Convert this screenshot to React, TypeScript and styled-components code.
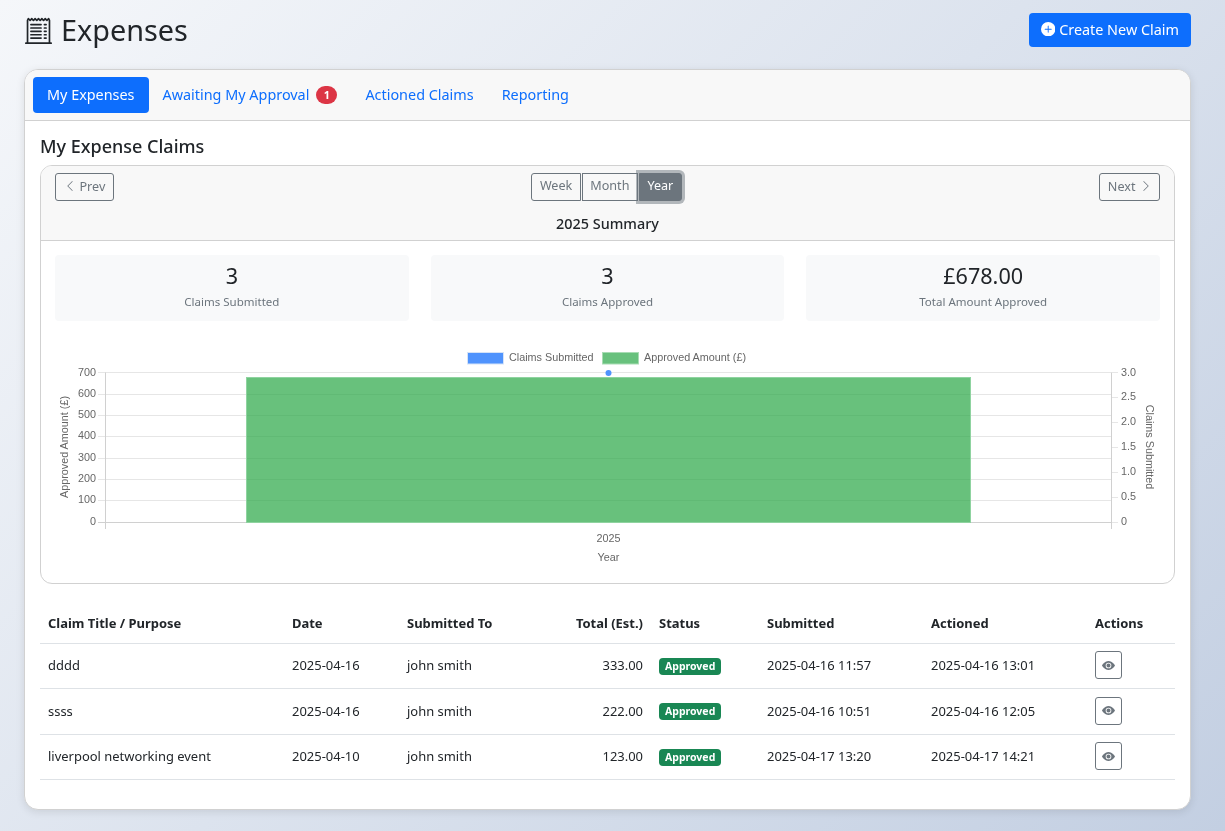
import React from 'react'
import styled, { createGlobalStyle } from 'styled-components'
import { BsReceiptCutoff, BsPlusCircleFill, BsEyeFill, BsChevronLeft, BsChevronRight } from 'react-icons/bs'

const GlobalStyle = createGlobalStyle`
  html, body { margin: 0; padding: 0; }
  body {
    min-height: 831px;
    font-family: "Noto Sans", sans-serif;
    color: #212529;
    font-size: 12.96px;
    background: linear-gradient(135deg, #f5f7fa 0%, #c3cfe2 100%);
  }
  * { box-sizing: border-box; }
`

const Page = styled.div`
  padding: 13px 34px 21px 24px;
  will-change: transform;
`

const TopBar = styled.div`
  display: flex;
  justify-content: space-between;
  align-items: flex-start;
  margin-bottom: 22px;
`

const Title = styled.h1`
  display: flex;
  align-items: center;
  gap: 9px;
  margin: 0;
  padding-left: 1px;
  font-size: 28.8px;
  line-height: 34px;
  font-weight: 400;
  color: #212529;
  svg { font-size: 27px; }
`

const CreateButton = styled.button`
  display: flex;
  align-items: center;
  gap: 4px;
  height: 34px;
  padding: 0 12px 2px;
  border: 0;
  border-radius: 4px;
  background: #0d6efd;
  color: #fff;
  font: 400 14.4px "Noto Sans", sans-serif;
`

const MainCard = styled.div`
  background: #fff;
  border: 1px solid #d1d1d1;
  border-radius: 14px;
  overflow: hidden;
  box-shadow: 0 2px 8px rgba(0, 0, 0, 0.1);
  height: 741px;
`

const TabBar = styled.div`
  display: flex;
  align-items: center;
  height: 51px;
  padding: 0 8px;
  background: #f8f8f8;
  border-bottom: 1px solid #d1d1d1;
`

const Tab = styled.a<{ $active?: boolean }>`
  display: flex;
  align-items: center;
  height: 36px;
  padding: 0 14px 1px;
  border-radius: 4px;
  font-size: 14.4px;
  color: ${(p) => (p.$active ? '#fff' : '#0d6efd')};
  background: ${(p) => (p.$active ? '#0d6efd' : 'transparent')};
`

const CountBadge = styled.span`
  display: inline-flex;
  align-items: center;
  justify-content: center;
  width: 21px;
  height: 18px;
  margin-left: 7px;
  border-radius: 9px;
  background: #dc3545;
  color: #fff;
  font-size: 10.8px;
  font-weight: 700;
`

const CardBody = styled.div`
  padding: 12px 15px;
`

const SectionTitle = styled.h2`
  margin: 0 0 6px;
  font-size: 18px;
  line-height: 26px;
  font-weight: 500;
`

const SummaryCard = styled.div`
  border: 1px solid #d1d1d1;
  border-radius: 12px;
  overflow: hidden;
  height: 419px;
  margin-bottom: 20px;
`

const SummaryHeader = styled.div`
  height: 75px;
  padding: 7px 14px 0;
  background: #f8f8f8;
  border-bottom: 1px solid #d1d1d1;
`

const PeriodRow = styled.div`
  display: flex;
  justify-content: space-between;
  align-items: flex-start;
`

const OutlineButton = styled.button`
  display: flex;
  align-items: center;
  gap: 4px;
  height: 28px;
  padding: 0 7.5px 2px;
  background: transparent;
  border: 1px solid #6c757d;
  border-radius: 3px;
  color: #6c757d;
  font: 400 12.6px "Noto Sans", sans-serif;
  svg { font-size: 12px; }
`

const RangeGroup = styled.div`
  display: flex;
  gap: 1px;
`

const RangeButton = styled.button<{ $active?: boolean; $first?: boolean; $last?: boolean }>`
  height: 28px;
  padding: 0 7.5px 3px;
  background: ${(p) => (p.$active ? '#6c757d' : 'transparent')};
  border: 1px solid #6c757d;
  border-radius: ${(p) => (p.$first ? '3px 0 0 3px' : p.$last ? '0 3px 3px 0' : '0')};
  color: ${(p) => (p.$active ? '#fff' : '#6c757d')};
  box-shadow: ${(p) => (p.$active ? '0 0 0 3px rgba(108, 117, 125, 0.5)' : 'none')};
  font: 400 12.6px "Noto Sans", sans-serif;
`

const SummaryTitle = styled.div`
  margin-top: 13px;
  text-align: center;
  font-size: 14.4px;
  line-height: 20px;
  font-weight: 500;
`

const StatGrid = styled.div`
  display: grid;
  grid-template-columns: repeat(3, 1fr);
  gap: 22px;
  padding: 14px 14px 0;
`

const StatBox = styled.div`
  height: 66px;
  padding-top: 6px;
  background: #f8f9fa;
  border-radius: 4px;
  text-align: center;
`

const StatValue = styled.div`
  font-size: 21.6px;
  line-height: 30px;
`

const StatLabel = styled.div`
  margin-top: 3px;
  font-size: 11.52px;
  line-height: 16px;
  color: #6c757d;
`

const ChartSvg = styled.svg`
  display: block;
  margin-top: 19px;
  text {
    font-family: "Liberation Sans", Arial, sans-serif;
    font-size: 10.8px;
    fill: #666;
  }
`

const ClaimsTable = styled.table`
  width: 100%;
  border-collapse: collapse;
  table-layout: fixed;
`

const HeadCell = styled.th<{ $right?: boolean }>`
  height: 39px;
  padding: 0 8px;
  text-align: ${(p) => (p.$right ? 'right' : 'left')};
  font-weight: 700;
  border-bottom: 1px solid #dee2e6;
`

const Cell = styled.td<{ $right?: boolean }>`
  height: 45.5px;
  padding: 0 8px 1px;
  text-align: ${(p) => (p.$right ? 'right' : 'left')};
  border-bottom: 1px solid #dee2e6;
`

const StatusBadge = styled.span`
  display: inline-block;
  padding: 0 6px;
  height: 17px;
  line-height: 17px;
  border-radius: 4px;
  background: #198754;
  color: #fff;
  font-size: 10.5px;
  font-weight: 700;
  vertical-align: middle;
`

const EyeButton = styled.button`
  display: flex;
  align-items: center;
  justify-content: center;
  width: 27px;
  height: 28px;
  padding: 0;
  background: transparent;
  border: 1px solid #6c757d;
  border-radius: 3px;
  color: #6c757d;
  svg { font-size: 13px; }
`

const claims = [
  { title: 'dddd', date: '2025-04-16', to: 'john smith', total: '333.00', submitted: '2025-04-16 11:57', actioned: '2025-04-16 13:01' },
  { title: 'ssss', date: '2025-04-16', to: 'john smith', total: '222.00', submitted: '2025-04-16 10:51', actioned: '2025-04-16 12:05' },
  { title: 'liverpool networking event', date: '2025-04-10', to: 'john smith', total: '123.00', submitted: '2025-04-17 13:20', actioned: '2025-04-17 14:21' },
]

const stats = [
  { value: '3', label: 'Claims Submitted' },
  { value: '3', label: 'Claims Approved' },
  { value: '£678.00', label: 'Total Amount Approved' },
]

const colWidths = [244, 115, 160, 92, 108, 164, 164, 88]

// grid rows as chart.js snapped them
const gridY = [372.5, 394.5, 415.5, 436.5, 458.5, 479.5, 500.5, 522.5]
const leftTicks = [700, 600, 500, 400, 300, 200, 100, 0]
const rightTicks = ['3.0', '2.5', '2.0', '1.5', '1.0', '0.5', '0']

function Chart() {
  const left = 105.5
  const right = 1111.5

  return (
    <ChartSvg width={1133} height={236} viewBox="41 340 1133 236">
      <rect x={467.5} y={352.5} width={36} height={11.5} fill="#4f93fd" stroke="#d5e3f7" strokeWidth={1} />
      <text x={509} y={361}>Claims Submitted</text>
      <rect x={602.5} y={352.5} width={36} height={11.5} fill="#68c17d" stroke="#a8dcb4" strokeWidth={1} />
      <text x={644} y={361}>Approved Amount (£)</text>

      {leftTicks.map((t, i) => (
        <g key={t}>
          <line x1={98} x2={right} y1={gridY[i]} y2={gridY[i]} stroke={t === 0 ? '#d0d0d0' : '#e6e6e6'} />
          <text x={96} y={375.5 + i * 21.3} textAnchor="end">{t}</text>
        </g>
      ))}
      {rightTicks.map((t, i) => {
        const y = 372.5 + i * 25
        return (
          <g key={t}>
            <line x1={right} x2={1118} y1={y} y2={y} stroke="#e6e6e6" />
            <text x={1121} y={375.5 + i * 24.9}>{t}</text>
          </g>
        )
      })}
      <line x1={left} x2={left} y1={372.5} y2={529} stroke="#d0d0d0" />
      <line x1={right} x2={right} y1={372.5} y2={529} stroke="#d0d0d0" />

      <rect x={246.5} y={377.5} width={724} height={145} fill="rgba(40,167,69,0.7)" stroke="#8fd3a0" strokeWidth={1} />
      <circle cx={608.5} cy={373} r={3} fill="#4f93fd" />

      <text x={608.5} y={542} textAnchor="middle">2025</text>
      <text x={608.5} y={561} textAnchor="middle">Year</text>
      <text transform="translate(68 447) rotate(-90)" textAnchor="middle">Approved Amount (£)</text>
      <text transform="translate(1146 447) rotate(90)" textAnchor="middle">Claims Submitted</text>
    </ChartSvg>
  )
}

export default function App() {
  return (
    <Page>
      <GlobalStyle />
      <TopBar>
        <Title>
          <BsReceiptCutoff />
          Expenses
        </Title>
        <CreateButton>
          <BsPlusCircleFill />
          Create New Claim
        </CreateButton>
      </TopBar>

      <MainCard>
        <TabBar>
          <Tab $active>My Expenses</Tab>
          <Tab>
            Awaiting My Approval
            <CountBadge>1</CountBadge>
          </Tab>
          <Tab>Actioned Claims</Tab>
          <Tab>Reporting</Tab>
        </TabBar>

        <CardBody>
          <SectionTitle>My Expense Claims</SectionTitle>

          <SummaryCard>
            <SummaryHeader>
              <PeriodRow>
                <OutlineButton>
                  <BsChevronLeft />
                  Prev
                </OutlineButton>
                <RangeGroup>
                  <RangeButton $first>Week</RangeButton>
                  <RangeButton>Month</RangeButton>
                  <RangeButton $active $last>Year</RangeButton>
                </RangeGroup>
                <OutlineButton>
                  Next
                  <BsChevronRight />
                </OutlineButton>
              </PeriodRow>
              <SummaryTitle>2025 Summary</SummaryTitle>
            </SummaryHeader>

            <StatGrid>
              {stats.map((s) => (
                <StatBox key={s.label}>
                  <StatValue>{s.value}</StatValue>
                  <StatLabel>{s.label}</StatLabel>
                </StatBox>
              ))}
            </StatGrid>

            <Chart />
          </SummaryCard>

          <ClaimsTable>
            <colgroup>
              {colWidths.map((w, i) => (
                <col key={i} width={w} />
              ))}
            </colgroup>
            <thead>
              <tr>
                <HeadCell>Claim Title / Purpose</HeadCell>
                <HeadCell>Date</HeadCell>
                <HeadCell>Submitted To</HeadCell>
                <HeadCell $right>Total (Est.)</HeadCell>
                <HeadCell>Status</HeadCell>
                <HeadCell>Submitted</HeadCell>
                <HeadCell>Actioned</HeadCell>
                <HeadCell>Actions</HeadCell>
              </tr>
            </thead>
            <tbody>
              {claims.map((c) => (
                <tr key={c.title}>
                  <Cell>{c.title}</Cell>
                  <Cell>{c.date}</Cell>
                  <Cell>{c.to}</Cell>
                  <Cell $right>{c.total}</Cell>
                  <Cell>
                    <StatusBadge>Approved</StatusBadge>
                  </Cell>
                  <Cell>{c.submitted}</Cell>
                  <Cell>{c.actioned}</Cell>
                  <Cell>
                    <EyeButton>
                      <BsEyeFill />
                    </EyeButton>
                  </Cell>
                </tr>
              ))}
            </tbody>
          </ClaimsTable>
        </CardBody>
      </MainCard>
    </Page>
  )
}
